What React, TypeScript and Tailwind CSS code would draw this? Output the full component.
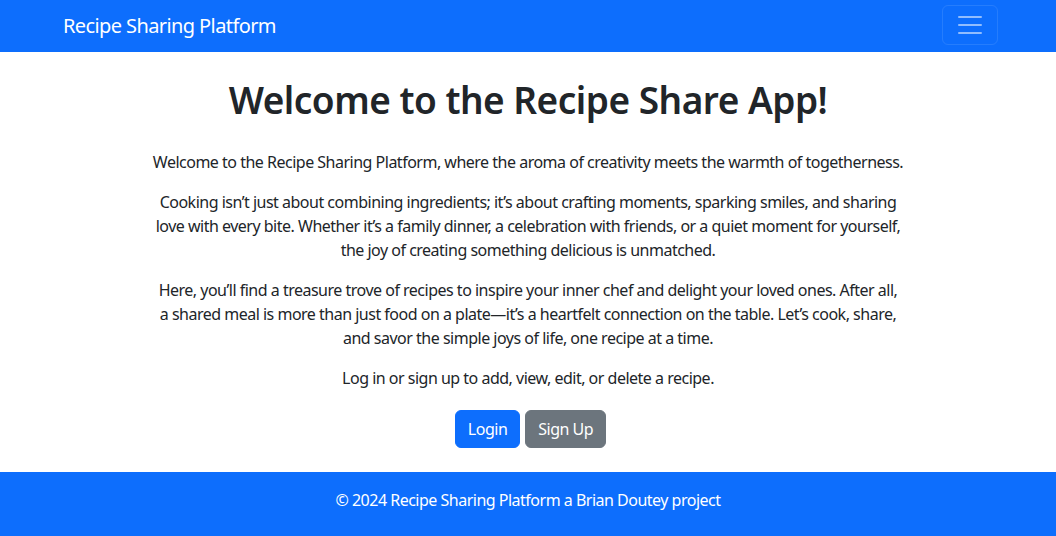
export default function App() {
  return (
    <div className="flex min-h-[536px] flex-col bg-white font-['Noto_Sans',sans-serif] tracking-[-0.5px] text-[#212529]">
      <nav className="bg-[#0d6efd]">
        <div className="mx-auto flex h-[52px] max-w-[960px] items-center justify-between px-3">
          <a href="#" className="ml-[3px] text-[20px] leading-[30px] tracking-[-0.6px] text-white">
            Recipe Sharing Platform
          </a>
          <button
            type="button"
            aria-label="Toggle navigation"
            className="mr-[-2px] mb-[3px] flex h-[40px] w-[56px] items-center justify-center rounded-md border border-white/10"
          >
            <svg width="30" height="30" viewBox="0 0 30 30" aria-hidden>
              <path
                d="M4 7h22M4 15h22M4 23h22"
                stroke="rgba(255,255,255,0.55)"
                strokeWidth="2"
                strokeLinecap="round"
              />
            </svg>
          </button>
        </div>
      </nav>

      <main className="mx-auto flex w-full max-w-[960px] flex-col items-center px-3 pt-6 text-center">
        <h1 className="mb-[26px] text-[37px] font-semibold leading-[48px] tracking-[-0.5px]">
          Welcome to the Recipe Share App!
        </h1>
        <p className="mb-4 text-base leading-6">
          Welcome to the Recipe Sharing Platform, where the aroma of creativity meets the warmth of togetherness.
        </p>
        <p className="mb-4 text-base leading-6">
          Cooking isn’t just about combining ingredients; it’s about crafting moments, sparking smiles, and sharing
          <br />
          love with every bite. Whether it’s a family dinner, a celebration with friends, or a quiet moment for yourself,
          <br />
          the joy of creating something delicious is unmatched.
        </p>
        <p className="mb-4 text-base leading-6">
          Here, you’ll find a treasure trove of recipes to inspire your inner chef and delight your loved ones. After all,
          <br />
          a shared meal is more than just food on a plate—it’s a heartfelt connection on the table. Let’s cook, share,
          <br />
          and savor the simple joys of life, one recipe at a time.
        </p>
        <p className="mb-4 text-base leading-6">Log in or sign up to add, view, edit, or delete a recipe.</p>
        <div className="mt-1 ml-[5px] flex gap-[5px]">
          <button
            type="button"
            className="rounded-md border border-[#0d6efd] bg-[#0d6efd] px-3 py-[6px] text-base leading-6 text-white"
          >
            Login
          </button>
          <button
            type="button"
            className="rounded-md border border-[#6c757d] bg-[#6c757d] px-3 py-[6px] text-base leading-6 text-white"
          >
            Sign Up
          </button>
        </div>
      </main>

      <footer className="mt-auto bg-[#0d6efd] pt-4 pb-6 text-center text-base leading-6 text-white">
        © 2024 Recipe Sharing Platform a Brian Doutey project
      </footer>
    </div>
  );
}
